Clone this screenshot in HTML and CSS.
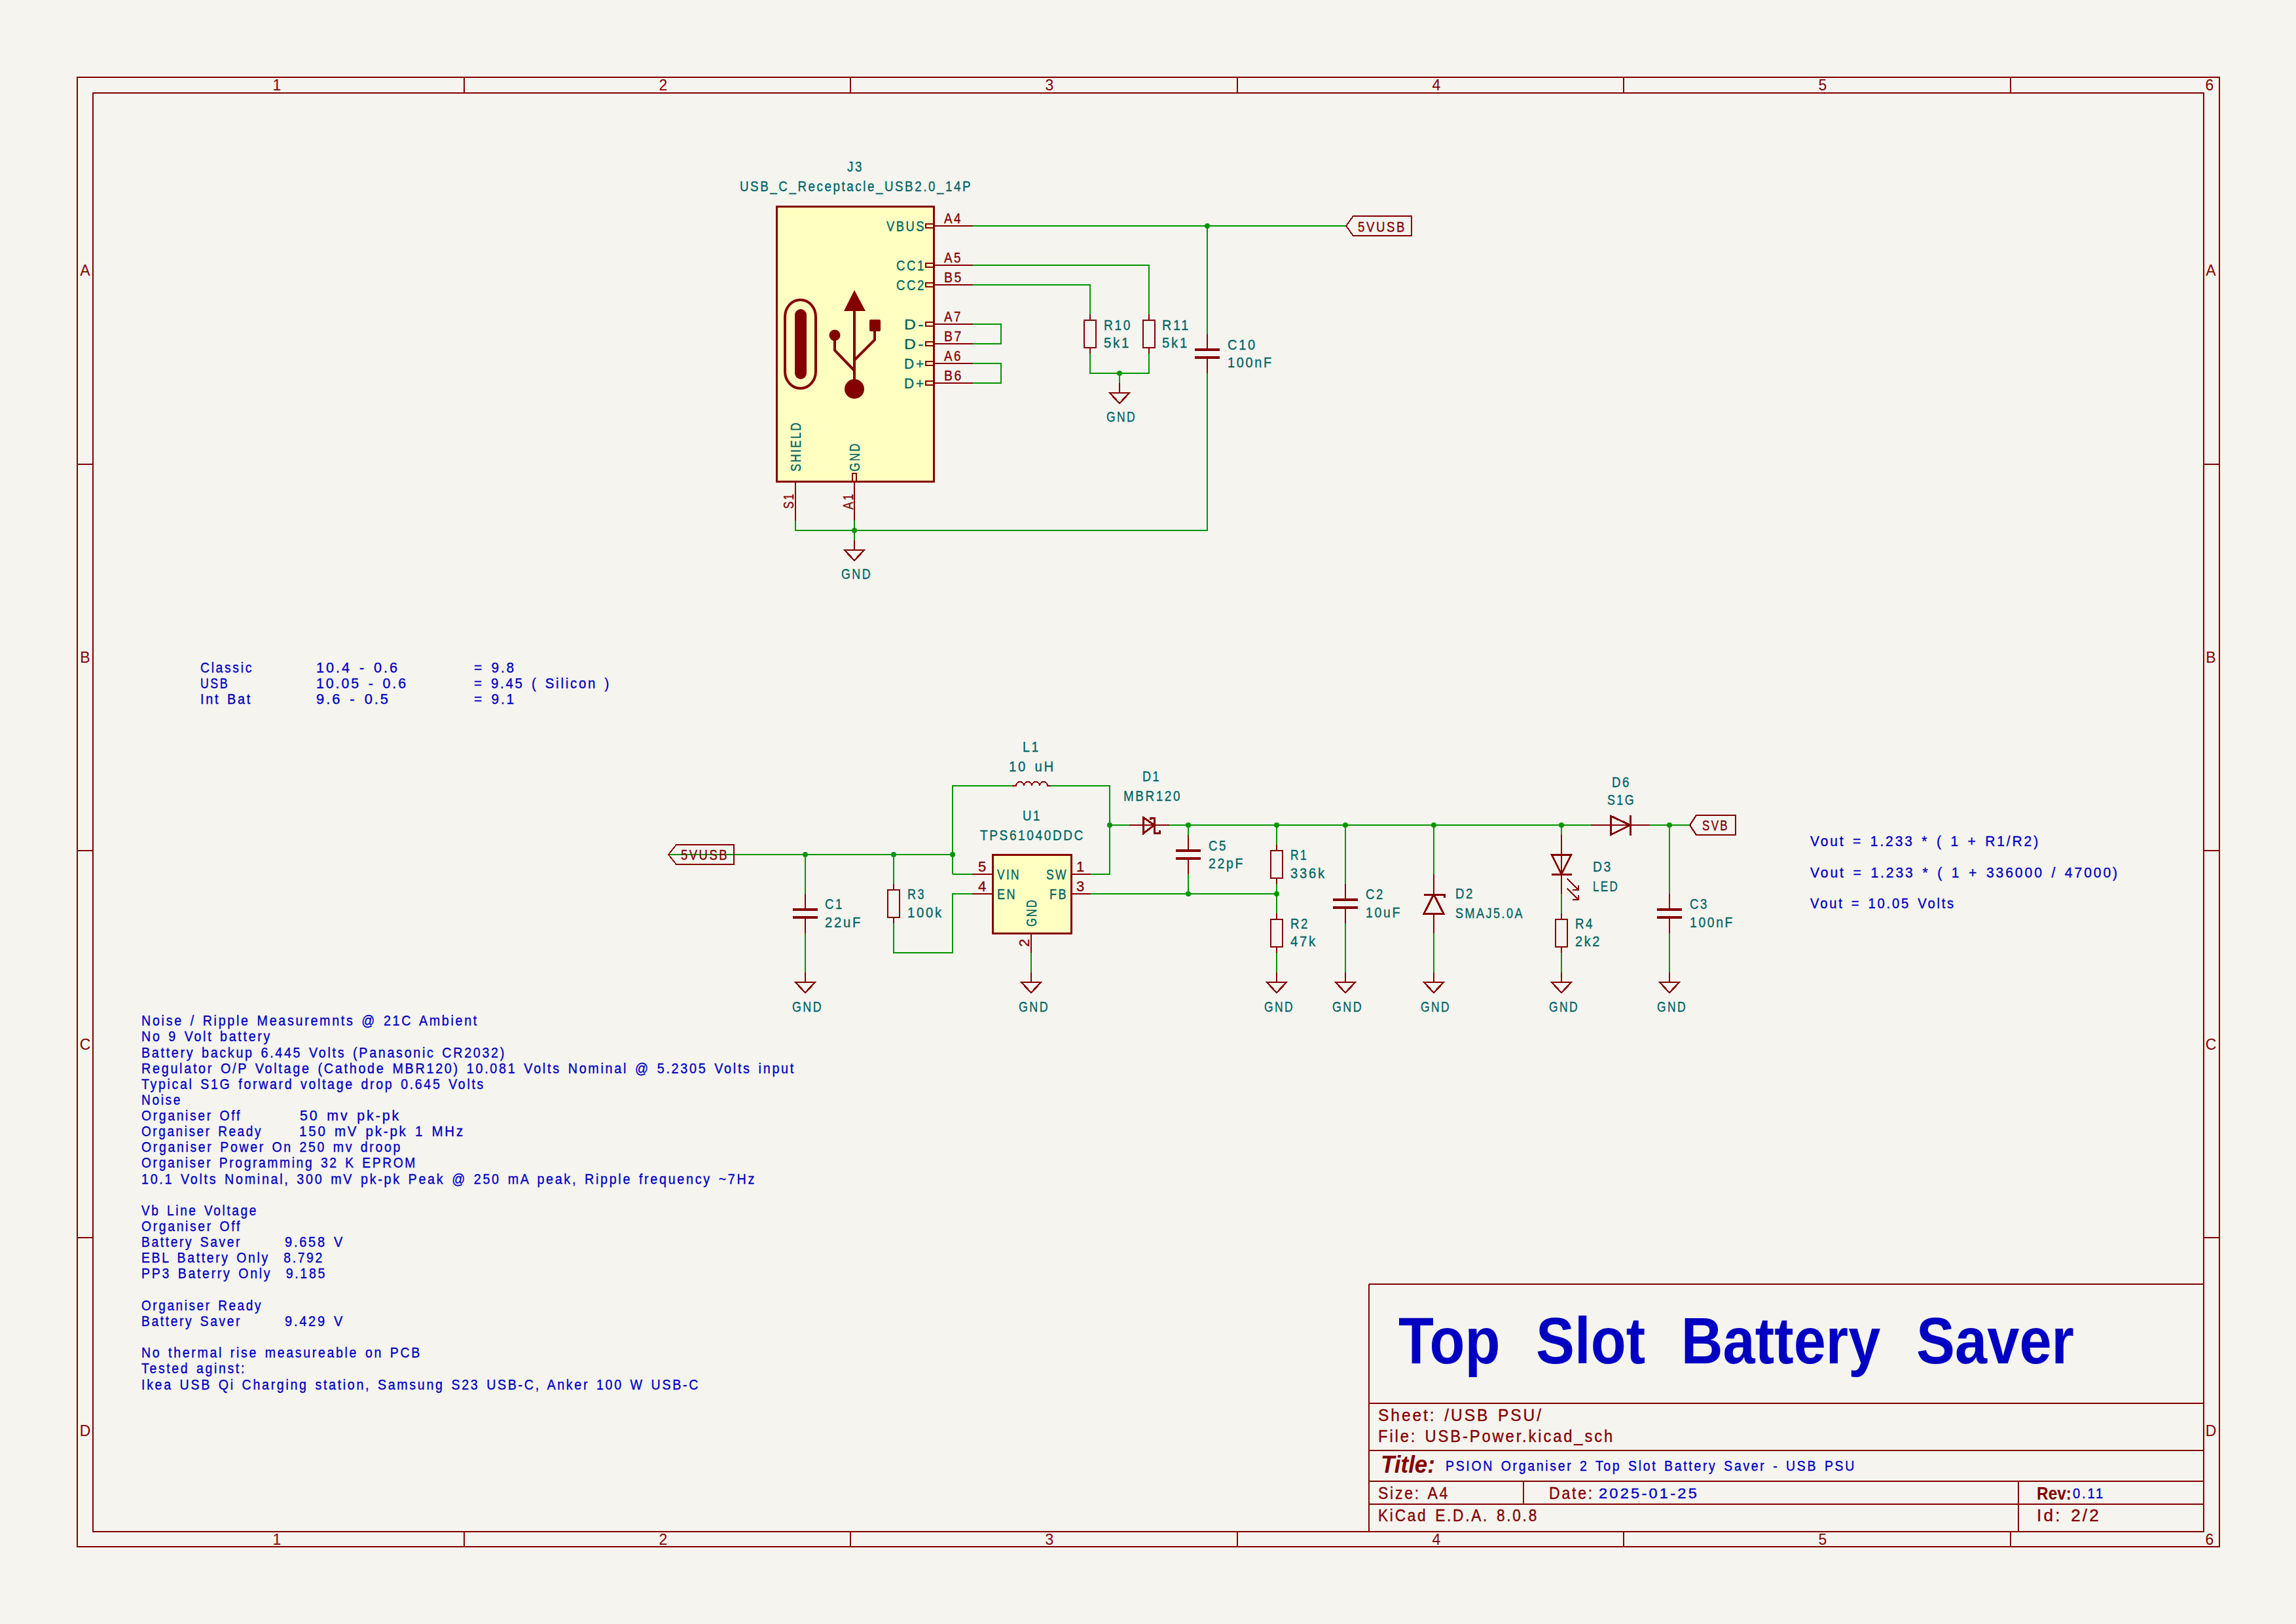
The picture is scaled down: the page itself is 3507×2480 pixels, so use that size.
FILE: index.html
```html
<!DOCTYPE html>
<html lang="en">
<head>
<meta charset="utf-8">
<title>Top Slot Battery Saver - USB PSU</title>
<link rel="stylesheet" href="styles.css">
</head>
<body>
<svg class="sheet" xmlns="http://www.w3.org/2000/svg" width="3507" height="2480" viewBox="0 0 3507 2480">
<defs>
  <g id="gnd"><path class="pin" d="M0 0V15"/><path class="sym" d="M-15 15H15L0 31Z"/></g>
  <g id="res"><path class="pin" d="M0 0V9M0 51V60"/><rect class="sym" x="-9" y="9" width="18" height="42"/></g>
  <g id="cap"><path class="pin" d="M0 0V24M0 36V60"/><path class="plate" d="M-19 24H19M-19 36H19"/></g>
</defs>

<!-- drawing sheet frame -->
<g class="frame">
  <rect x="118" y="118" width="3272" height="2244"/>
  <rect x="142" y="142" width="3224" height="2197"/>
  <path d="M709 118V142M1299 118V142M1890 118V142M2480 118V142M3071 118V142"/>
  <path d="M709 2339V2362M1299 2339V2362M1890 2339V2362M2480 2339V2362M3071 2339V2362"/>
  <path d="M118 709H142M118 1299H142M118 1890H142M3366 709H3390M3366 1299H3390M3366 1890H3390"/>
  <path d="M2091 1961H3366M2091 2143H3366M2091 2215H3366M2091 2262H3366M2091 2297H3366M2091 1961V2339M2327 2262V2297M3083 2262V2339"/>
</g>
<g class="t-frame">
  <text x="423" y="138">1</text><text x="1013" y="138">2</text><text x="1603" y="138">3</text><text x="2194" y="138">4</text><text x="2784" y="138">5</text><text x="3375" y="138">6</text>
  <text x="423" y="2359">1</text><text x="1013" y="2359">2</text><text x="1603" y="2359">3</text><text x="2194" y="2359">4</text><text x="2784" y="2359">5</text><text x="3375" y="2359">6</text>
  <text x="130" y="421">A</text><text x="130" y="1012">B</text><text x="130" y="1603">C</text><text x="130" y="2193">D</text>
  <text x="3377" y="421">A</text><text x="3377" y="1012">B</text><text x="3377" y="1603">C</text><text x="3377" y="2193">D</text>
</g>

<!-- title block -->
<text class="t-big" x="2136" y="2082" textLength="1032" lengthAdjust="spacingAndGlyphs">Top Slot Battery Saver</text>
<text class="t-tb" x="2105" y="2170" textLength="252" lengthAdjust="spacingAndGlyphs">Sheet: /USB PSU/</text>
<text class="t-tb" x="2105" y="2202" textLength="361" lengthAdjust="spacingAndGlyphs">File: USB-Power.kicad_sch</text>
<text class="t-title" x="2109" y="2249" textLength="83" lengthAdjust="spacingAndGlyphs">Title:</text>
<text class="t-note" x="2208" y="2246" textLength="627" lengthAdjust="spacingAndGlyphs">PSION Organiser 2 Top Slot Battery Saver - USB PSU</text>
<text class="t-tb" x="2105" y="2289" textLength="109" lengthAdjust="spacingAndGlyphs">Size: A4</text>
<text class="t-tb" x="2366" y="2289" textLength="69" lengthAdjust="spacingAndGlyphs">Date:</text>
<text class="t-note" x="2442" y="2288" textLength="153" lengthAdjust="spacingAndGlyphs">2025-01-25</text>
<text class="t-rev" x="3111" y="2290" textLength="53" lengthAdjust="spacingAndGlyphs">Rev:</text>
<text class="t-note" x="3166" y="2288" textLength="49" lengthAdjust="spacingAndGlyphs">0.11</text>
<text class="t-tb" x="2105" y="2323" textLength="245" lengthAdjust="spacingAndGlyphs">KiCad E.D.A. 8.0.8</text>
<text class="t-tb" x="3111" y="2323" textLength="98" lengthAdjust="spacingAndGlyphs">Id: 2/2</text>

<!-- wires: USB connector -->
<path class="wire" d="M1486 345H2056M1486 405H1755V480M1486 435H1665V480M1486 495H1529V525H1486M1486 555H1529V585H1486M1665 540V570H1755V540M1710 570V585M1844 345V510M1844 570V810H1215V795M1305 795V825"/>
<!-- wires: regulator -->
<path class="wire" d="M1021 1305H1455M1230 1305V1365M1230 1425V1485M1365 1305V1350M1365 1410V1455H1455V1365H1485M1455 1335H1485M1455 1335V1200H1546M1605 1200H1695V1335H1666M1695 1260H1725M1786 1260H2430M2520 1260H2581M1666 1365H1950M1575 1455V1485M1815 1260V1275M1815 1335V1365"/>
<path class="wire" d="M1950 1260V1290M1950 1350V1395M1950 1455V1485M2055 1260V1350M2055 1410V1485M2190 1260V1335M2190 1425V1485M2385 1260V1275M2385 1365V1395M2385 1455V1485M2550 1260V1365M2550 1425V1485"/>

<!-- J3 USB-C -->
<rect class="body" x="1186" y="315" width="240" height="420"/>
<path class="pin" d="M1426 345H1486M1426 405H1486M1426 435H1486M1426 495H1486M1426 525H1486M1426 555H1486M1426 585H1486M1215 735V795M1305 735V795"/>
<g class="pinbox">
  <rect x="1414" y="342" width="12" height="6"/><rect x="1414" y="402" width="12" height="6"/><rect x="1414" y="432" width="12" height="6"/><rect x="1414" y="492" width="12" height="6"/><rect x="1414" y="522" width="12" height="6"/><rect x="1414" y="552" width="12" height="6"/><rect x="1414" y="582" width="12" height="6"/><rect x="1302" y="723" width="6" height="12"/>
</g>
<!-- USB logo -->
<rect class="usb-shell" x="1199" y="458" width="47" height="135" rx="23" ry="26"/>
<rect class="usb-fill" x="1214" y="472" width="18" height="107" rx="9"/>
<path class="usb-line" d="M1305 470V590M1275 515V535L1305 566M1336 500V519L1305 550"/>
<path class="usb-fill" d="M1305 443L1322 475H1289Z"/>
<circle class="usb-fill" cx="1305" cy="594" r="15"/>
<circle class="usb-fill" cx="1275" cy="512" r="8.5"/>
<rect class="usb-fill" x="1328" y="488" width="17" height="18" rx="2"/>

<use href="#res" x="1665" y="480"/>
<use href="#res" x="1755" y="480"/>
<use href="#cap" x="1844" y="510"/>
<use href="#gnd" x="1710" y="585"/>
<use href="#gnd" x="1305" y="825"/>

<!-- net labels -->
<path class="label" d="M2056 345L2067 330H2156V360H2067Z"/>
<path class="label" d="M1021 1305L1033 1290H1121V1320H1033Z"/>
<path class="label" d="M2581 1260L2591 1245H2651V1275H2591Z"/>

<!-- U1 -->
<rect class="body" x="1516" y="1305" width="120" height="120"/>
<path class="pin" d="M1485 1335H1516M1485 1365H1516M1636 1335H1666M1636 1365H1666M1575 1425V1455"/>
<!-- inductor -->
<path class="pin" d="M1546 1200H1552A6 6 0 0 1 1564 1200A6 6 0 0 1 1576 1200A6 6 0 0 1 1588 1200A6 6 0 0 1 1600 1200H1605"/>
<!-- D1 schottky -->
<path class="pin" d="M1725 1260H1786"/>
<path class="diode" d="M1746 1248V1273L1763 1260ZM1757 1252V1249H1763V1272H1771V1268"/>
<!-- D6 -->
<path class="pin" d="M2430 1260H2520"/>
<path class="diode" d="M2460 1246V1275L2490 1260ZM2490 1245V1276"/>
<!-- D2 zener -->
<path class="pin" d="M2190 1335V1365M2190 1395V1425"/>
<path class="diode" d="M2190 1366L2175 1395H2205ZM2206 1371V1366H2175"/>
<!-- D3 LED -->
<path class="pin" d="M2385 1275V1365"/>
<path class="diode" d="M2370 1305H2400L2385 1335ZM2370 1335H2401"/>
<path class="pin" d="M2394 1342L2411 1359M2411 1352V1359H2402M2394 1357L2411 1374M2411 1367V1374H2402"/>

<use href="#cap" x="1230" y="1365"/>
<use href="#res" x="1365" y="1350"/>
<use href="#cap" x="1815" y="1275"/>
<use href="#res" x="1950" y="1290"/>
<use href="#res" x="1950" y="1395"/>
<use href="#cap" x="2055" y="1350"/>
<use href="#res" x="2385" y="1395"/>
<use href="#cap" x="2550" y="1365"/>
<use href="#gnd" x="1230" y="1485"/>
<use href="#gnd" x="1575" y="1485"/>
<use href="#gnd" x="1950" y="1485"/>
<use href="#gnd" x="2055" y="1485"/>
<use href="#gnd" x="2190" y="1485"/>
<use href="#gnd" x="2385" y="1485"/>
<use href="#gnd" x="2550" y="1485"/>

<!-- junctions -->
<g class="junction">
  <circle cx="1844" cy="345" r="4"/><circle cx="1710" cy="570" r="4"/><circle cx="1305" cy="810" r="4"/>
  <circle cx="1230" cy="1305" r="4"/><circle cx="1365" cy="1305" r="4"/><circle cx="1455" cy="1305" r="4"/>
  <circle cx="1695" cy="1260" r="4"/><circle cx="1815" cy="1260" r="4"/><circle cx="1950" cy="1260" r="4"/>
  <circle cx="2055" cy="1260" r="4"/><circle cx="2190" cy="1260" r="4"/><circle cx="2385" cy="1260" r="4"/>
  <circle cx="2550" cy="1260" r="4"/><circle cx="1815" cy="1365" r="4"/><circle cx="1950" cy="1365" r="4"/>
</g>

<!-- field text -->
<g class="f">
  <text x="1294" y="262" textLength="25" lengthAdjust="spacingAndGlyphs">J3</text>
  <text x="1130" y="292" textLength="355" lengthAdjust="spacingAndGlyphs">USB_C_Receptacle_USB2.0_14P</text>
  <text x="1354" y="353" textLength="60" lengthAdjust="spacingAndGlyphs">VBUS</text>
  <text x="1369" y="413" textLength="45" lengthAdjust="spacingAndGlyphs">CC1</text>
  <text x="1369" y="443" textLength="45" lengthAdjust="spacingAndGlyphs">CC2</text>
  <text x="1381" y="503" textLength="33" lengthAdjust="spacingAndGlyphs">D-</text>
  <text x="1381" y="533" textLength="33" lengthAdjust="spacingAndGlyphs">D-</text>
  <text x="1381" y="563" textLength="33" lengthAdjust="spacingAndGlyphs">D+</text>
  <text x="1381" y="593" textLength="33" lengthAdjust="spacingAndGlyphs">D+</text>
  <text transform="rotate(-90 1223 720)" x="1223" y="720" textLength="77" lengthAdjust="spacingAndGlyphs">SHIELD</text>
  <text transform="rotate(-90 1313 720)" x="1313" y="720" textLength="45" lengthAdjust="spacingAndGlyphs">GND</text>
  <text x="1686" y="504" textLength="43" lengthAdjust="spacingAndGlyphs">R10</text>
  <text x="1686" y="531" textLength="41" lengthAdjust="spacingAndGlyphs">5k1</text>
  <text x="1775" y="504" textLength="43" lengthAdjust="spacingAndGlyphs">R11</text>
  <text x="1775" y="531" textLength="41" lengthAdjust="spacingAndGlyphs">5k1</text>
  <text x="1875" y="534" textLength="45" lengthAdjust="spacingAndGlyphs">C10</text>
  <text x="1875" y="561" textLength="70" lengthAdjust="spacingAndGlyphs">100nF</text>
  <text x="1690" y="644" textLength="46" lengthAdjust="spacingAndGlyphs">GND</text>
  <text x="1285" y="884" textLength="47" lengthAdjust="spacingAndGlyphs">GND</text>

  <text x="1562" y="1148" textLength="27" lengthAdjust="spacingAndGlyphs">L1</text>
  <text x="1541" y="1178" textLength="71" lengthAdjust="spacingAndGlyphs">10 uH</text>
  <text x="1745" y="1193" textLength="28" lengthAdjust="spacingAndGlyphs">D1</text>
  <text x="1716" y="1223" textLength="89" lengthAdjust="spacingAndGlyphs">MBR120</text>
  <text x="1562" y="1253" textLength="29" lengthAdjust="spacingAndGlyphs">U1</text>
  <text x="1497" y="1283" textLength="160" lengthAdjust="spacingAndGlyphs">TPS61040DDC</text>
  <text x="1523" y="1343" textLength="36" lengthAdjust="spacingAndGlyphs">VIN</text>
  <text x="1523" y="1373" textLength="30" lengthAdjust="spacingAndGlyphs">EN</text>
  <text x="1598" y="1343" textLength="33" lengthAdjust="spacingAndGlyphs">SW</text>
  <text x="1603" y="1373" textLength="28" lengthAdjust="spacingAndGlyphs">FB</text>
  <text transform="rotate(-90 1583 1415)" x="1583" y="1415" textLength="43" lengthAdjust="spacingAndGlyphs">GND</text>
  <text x="1260" y="1388" textLength="29" lengthAdjust="spacingAndGlyphs">C1</text>
  <text x="1260" y="1416" textLength="57" lengthAdjust="spacingAndGlyphs">22uF</text>
  <text x="1386" y="1373" textLength="28" lengthAdjust="spacingAndGlyphs">R3</text>
  <text x="1386" y="1401" textLength="55" lengthAdjust="spacingAndGlyphs">100k</text>
  <text x="1846" y="1299" textLength="29" lengthAdjust="spacingAndGlyphs">C5</text>
  <text x="1846" y="1326" textLength="55" lengthAdjust="spacingAndGlyphs">22pF</text>
  <text x="1971" y="1313" textLength="27" lengthAdjust="spacingAndGlyphs">R1</text>
  <text x="1971" y="1341" textLength="55" lengthAdjust="spacingAndGlyphs">336k</text>
  <text x="1971" y="1418" textLength="29" lengthAdjust="spacingAndGlyphs">R2</text>
  <text x="1971" y="1445" textLength="41" lengthAdjust="spacingAndGlyphs">47k</text>
  <text x="2086" y="1373" textLength="29" lengthAdjust="spacingAndGlyphs">C2</text>
  <text x="2086" y="1401" textLength="55" lengthAdjust="spacingAndGlyphs">10uF</text>
  <text x="2223" y="1372" textLength="29" lengthAdjust="spacingAndGlyphs">D2</text>
  <text x="2223" y="1402" textLength="105" lengthAdjust="spacingAndGlyphs">SMAJ5.0A</text>
  <text x="2433" y="1331" textLength="30" lengthAdjust="spacingAndGlyphs">D3</text>
  <text x="2433" y="1361" textLength="40" lengthAdjust="spacingAndGlyphs">LED</text>
  <text x="2406" y="1418" textLength="29" lengthAdjust="spacingAndGlyphs">R4</text>
  <text x="2406" y="1445" textLength="40" lengthAdjust="spacingAndGlyphs">2k2</text>
  <text x="2462" y="1202" textLength="29" lengthAdjust="spacingAndGlyphs">D6</text>
  <text x="2455" y="1229" textLength="43" lengthAdjust="spacingAndGlyphs">S1G</text>
  <text x="2581" y="1388" textLength="29" lengthAdjust="spacingAndGlyphs">C3</text>
  <text x="2581" y="1416" textLength="68" lengthAdjust="spacingAndGlyphs">100nF</text>
  <text x="1210" y="1545" textLength="47" lengthAdjust="spacingAndGlyphs">GND</text>
  <text x="1556" y="1545" textLength="47" lengthAdjust="spacingAndGlyphs">GND</text>
  <text x="1931" y="1545" textLength="46" lengthAdjust="spacingAndGlyphs">GND</text>
  <text x="2035" y="1545" textLength="47" lengthAdjust="spacingAndGlyphs">GND</text>
  <text x="2170" y="1545" textLength="46" lengthAdjust="spacingAndGlyphs">GND</text>
  <text x="2366" y="1545" textLength="46" lengthAdjust="spacingAndGlyphs">GND</text>
  <text x="2531" y="1545" textLength="46" lengthAdjust="spacingAndGlyphs">GND</text>
</g>

<!-- pin numbers and labels -->
<g class="p">
  <text x="1442" y="341" textLength="28" lengthAdjust="spacingAndGlyphs">A4</text>
  <text x="1442" y="401" textLength="28" lengthAdjust="spacingAndGlyphs">A5</text>
  <text x="1442" y="431" textLength="29" lengthAdjust="spacingAndGlyphs">B5</text>
  <text x="1442" y="491" textLength="28" lengthAdjust="spacingAndGlyphs">A7</text>
  <text x="1442" y="521" textLength="29" lengthAdjust="spacingAndGlyphs">B7</text>
  <text x="1442" y="551" textLength="28" lengthAdjust="spacingAndGlyphs">A6</text>
  <text x="1442" y="581" textLength="29" lengthAdjust="spacingAndGlyphs">B6</text>
  <text transform="rotate(-90 1212 777)" x="1212" y="777" textLength="25" lengthAdjust="spacingAndGlyphs">S1</text>
  <text transform="rotate(-90 1303 778)" x="1303" y="778" textLength="26" lengthAdjust="spacingAndGlyphs">A1</text>
  <text x="2074" y="354" textLength="74" lengthAdjust="spacingAndGlyphs">5VUSB</text>
  <text x="1040" y="1313" textLength="73" lengthAdjust="spacingAndGlyphs">5VUSB</text>
  <text x="2600" y="1268" textLength="41" lengthAdjust="spacingAndGlyphs">SVB</text>
  <text x="1494" y="1331">5</text>
  <text x="1494" y="1361">4</text>
  <text x="1644" y="1331">1</text>
  <text x="1644" y="1361">3</text>
  <text transform="rotate(-90 1572 1446)" x="1572" y="1446">2</text>
</g>

<!-- notes -->
<g class="n">
  <text x="306" y="1027" textLength="81" lengthAdjust="spacingAndGlyphs">Classic</text>
  <text x="483" y="1027" textLength="127" lengthAdjust="spacingAndGlyphs">10.4 - 0.6</text>
  <text x="724" y="1027" textLength="64" lengthAdjust="spacingAndGlyphs">= 9.8</text>
  <text x="306" y="1051" textLength="44" lengthAdjust="spacingAndGlyphs">USB</text>
  <text x="483" y="1051" textLength="140" lengthAdjust="spacingAndGlyphs">10.05 - 0.6</text>
  <text x="724" y="1051" textLength="209" lengthAdjust="spacingAndGlyphs">= 9.45 ( Silicon )</text>
  <text x="306" y="1075" textLength="79" lengthAdjust="spacingAndGlyphs">Int Bat</text>
  <text x="483" y="1075" textLength="113" lengthAdjust="spacingAndGlyphs">9.6 - 0.5</text>
  <text x="724" y="1075" textLength="64" lengthAdjust="spacingAndGlyphs">= 9.1</text>

  <text x="2765" y="1292" textLength="351" lengthAdjust="spacingAndGlyphs">Vout = 1.233 * ( 1 + R1/R2)</text>
  <text x="2765" y="1340" textLength="472" lengthAdjust="spacingAndGlyphs">Vout = 1.233 * ( 1 + 336000 / 47000)</text>
  <text x="2765" y="1387" textLength="222" lengthAdjust="spacingAndGlyphs">Vout = 10.05 Volts</text>

  <text x="216" y="1566" textLength="515" lengthAdjust="spacingAndGlyphs">Noise / Ripple Measuremnts @ 21C Ambient</text>
  <text x="216" y="1590" textLength="199" lengthAdjust="spacingAndGlyphs">No 9 Volt battery</text>
  <text x="216" y="1615" textLength="557" lengthAdjust="spacingAndGlyphs">Battery backup 6.445 Volts (Panasonic CR2032)</text>
  <text x="216" y="1639" textLength="999" lengthAdjust="spacingAndGlyphs">Regulator O/P Voltage (Cathode MBR120) 10.081 Volts Nominal @ 5.2305 Volts input</text>
  <text x="216" y="1663" textLength="525" lengthAdjust="spacingAndGlyphs">Typical S1G forward voltage drop 0.645 Volts</text>
  <text x="216" y="1687" textLength="62" lengthAdjust="spacingAndGlyphs">Noise</text>
  <text x="216" y="1711" textLength="153" lengthAdjust="spacingAndGlyphs">Organiser Off</text>
  <text x="458" y="1711" textLength="154" lengthAdjust="spacingAndGlyphs">50 mv pk-pk</text>
  <text x="216" y="1735" textLength="185" lengthAdjust="spacingAndGlyphs">Organiser Ready</text>
  <text x="457" y="1735" textLength="253" lengthAdjust="spacingAndGlyphs">150 mV pk-pk 1 MHz</text>
  <text x="216" y="1759" textLength="398" lengthAdjust="spacingAndGlyphs">Organiser Power On 250 mv droop</text>
  <text x="216" y="1783" textLength="421" lengthAdjust="spacingAndGlyphs">Organiser Programming 32 K EPROM</text>
  <text x="216" y="1808" textLength="939" lengthAdjust="spacingAndGlyphs">10.1 Volts Nominal, 300 mV pk-pk Peak @ 250 mA peak, Ripple frequency ~7Hz</text>
  <text x="216" y="1856" textLength="178" lengthAdjust="spacingAndGlyphs">Vb Line Voltage</text>
  <text x="216" y="1880" textLength="153" lengthAdjust="spacingAndGlyphs">Organiser Off</text>
  <text x="216" y="1904" textLength="153" lengthAdjust="spacingAndGlyphs">Battery Saver</text>
  <text x="435" y="1904" textLength="91" lengthAdjust="spacingAndGlyphs">9.658 V</text>
  <text class="pre" x="216" y="1928" textLength="279" lengthAdjust="spacingAndGlyphs">EBL Battery Only  8.792</text>
  <text class="pre" x="216" y="1952" textLength="283" lengthAdjust="spacingAndGlyphs">PP3 Baterry Only  9.185</text>
  <text x="216" y="2001" textLength="185" lengthAdjust="spacingAndGlyphs">Organiser Ready</text>
  <text x="216" y="2025" textLength="153" lengthAdjust="spacingAndGlyphs">Battery Saver</text>
  <text x="435" y="2025" textLength="91" lengthAdjust="spacingAndGlyphs">9.429 V</text>
  <text x="216" y="2073" textLength="428" lengthAdjust="spacingAndGlyphs">No thermal rise measureable on PCB</text>
  <text x="216" y="2097" textLength="160" lengthAdjust="spacingAndGlyphs">Tested aginst:</text>
  <text x="216" y="2122" textLength="853" lengthAdjust="spacingAndGlyphs">Ikea USB Qi Charging station, Samsung S23 USB-C, Anker 100 W USB-C</text>
</g>
</svg>
</body>
</html>
```
FILE: styles.css
```css
html, body {
  margin: 0;
  padding: 0;
  background: #f5f4ef;
}

.sheet {
  display: block;
  font-family: "Liberation Sans", Arial, sans-serif;
}

/* lines */
.frame rect, .frame path {
  fill: none;
  stroke: #840000;
  stroke-width: 2;
  shape-rendering: crispEdges;
}
.wire {
  fill: none;
  stroke: #009600;
  stroke-width: 2;
  shape-rendering: crispEdges;
}
.pin {
  fill: none;
  stroke: #840000;
  stroke-width: 2;
  shape-rendering: crispEdges;
}
.sym {
  fill: none;
  stroke: #840000;
  stroke-width: 2.4;
  shape-rendering: crispEdges;
}
.plate {
  fill: none;
  stroke: #840000;
  stroke-width: 4;
  shape-rendering: crispEdges;
}
.body {
  fill: #ffffc2;
  stroke: #840000;
  stroke-width: 3;
  shape-rendering: crispEdges;
}
.pinbox rect {
  fill: none;
  stroke: #840000;
  stroke-width: 2;
  shape-rendering: crispEdges;
}
.label {
  fill: none;
  stroke: #840000;
  stroke-width: 2;
  shape-rendering: crispEdges;
}
.diode {
  fill: none;
  stroke: #840000;
  stroke-width: 3;
  shape-rendering: crispEdges;
}
.junction circle {
  fill: #009600;
}
.usb-shell {
  fill: none;
  stroke: #840000;
  stroke-width: 4;
}
.usb-fill {
  fill: #840000;
  stroke: none;
}
.usb-line {
  fill: none;
  stroke: #840000;
  stroke-width: 4;
}

/* text: the narrow, widely spaced look of the KiCad stroke font */
.f text, .p text, .n text, .t-note, .t-tb {
  letter-spacing: 3px;
  word-spacing: 3px;
  stroke-width: 0.35px;
  paint-order: stroke;
}
.f text, .p text, .n text, .t-note {
  font-size: 22px;
}
.f text {
  fill: #006464;
  stroke: #006464;
}
.p text {
  fill: #840000;
  stroke: #840000;
}
.n text, .t-note {
  fill: #0000c2;
  stroke: #0000c2;
}
.n text.pre {
  white-space: pre;
}
.t-frame text {
  fill: #840000;
  font-size: 23px;
  text-anchor: middle;
}
.t-tb {
  fill: #840000;
  stroke: #840000;
  font-size: 25px;
}
.t-title {
  fill: #840000;
  font-size: 36px;
  font-weight: bold;
  font-style: italic;
}
.t-rev {
  fill: #840000;
  font-size: 28px;
  font-weight: bold;
}
.t-big {
  fill: #0000c2;
  font-size: 100px;
  font-weight: bold;
  word-spacing: 34px;
}
```
